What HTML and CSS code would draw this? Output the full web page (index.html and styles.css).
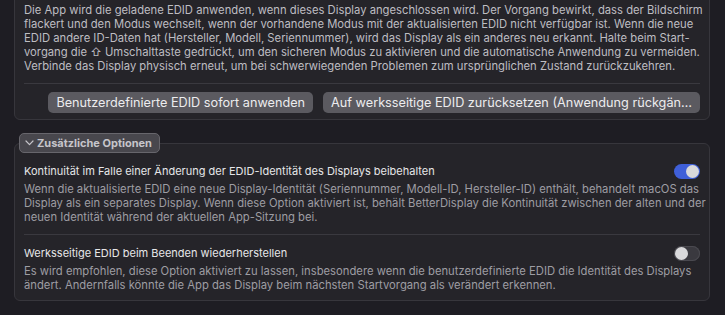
FILE: index.html
```html
<!DOCTYPE html>
<html>
<head>
    <meta charset="utf-8">
    <title>EDID Einstellungen</title>
    <link rel="stylesheet" href="styles.css">
</head>
<body>
    <div class="page">
        <div class="card card-top">
            <p class="info">
                Die App wird die geladene EDID anwenden, wenn dieses Display angeschlossen wird. Der Vorgang bewirkt, dass der Bildschirm<br>
                flackert und den Modus wechselt, wenn der vorhandene Modus mit der aktualisierten EDID nicht verfügbar ist. Wenn die neue<br>
                EDID andere ID-Daten hat (Hersteller, Modell, Seriennummer), wird das Display als ein anderes neu erkannt. Halte beim Start-<br>
                vorgang die ⇧ Umschalttaste gedrückt, um den sicheren Modus zu aktivieren und die automatische Anwendung zu vermeiden.<br>
                Verbinde das Display physisch erneut, um bei schwerwiegenden Problemen zum ursprünglichen Zustand zurückzukehren.
            </p>
            <div class="sep"></div>
            <div class="actions">
                <button class="btn">Benutzerdefinierte EDID sofort anwenden</button>
                <button class="btn">Auf werksseitige EDID zurücksetzen (Anwendung rückgän…</button>
            </div>
        </div>

        <div class="group">
            <button class="disclosure">
                <svg width="9" height="6" viewBox="0 0 9 6"><path d="M1 1 L4.5 4.6 L8 1" fill="none" stroke="#c6c5ca" stroke-width="1.2" stroke-linecap="round" stroke-linejoin="round"/></svg>
                Zusätzliche Optionen
            </button>
            <div class="card card-options">
                <div class="option">
                    <div class="option-head">
                        <span class="option-title">Kontinuität im Falle einer Änderung der EDID-Identität des Displays beibehalten</span>
                        <span class="toggle on"><span class="knob"></span></span>
                    </div>
                    <p class="option-desc">
                        Wenn die aktualisierte EDID eine neue Display-Identität (Seriennummer, Modell-ID, Hersteller-ID) enthält, behandelt macOS das<br>
                        Display als ein separates Display. Wenn diese Option aktiviert ist, behält BetterDisplay die Kontinuität zwischen der alten und der<br>
                        neuen Identität während der aktuellen App-Sitzung bei.
                    </p>
                </div>
                <div class="sep"></div>
                <div class="option">
                    <div class="option-head">
                        <span class="option-title">Werksseitige EDID beim Beenden wiederherstellen</span>
                        <span class="toggle"><span class="knob"></span></span>
                    </div>
                    <p class="option-desc">
                        Es wird empfohlen, diese Option aktiviert zu lassen, insbesondere wenn die benutzerdefinierte EDID die Identität des Displays<br>
                        ändert. Andernfalls könnte die App das Display beim nächsten Startvorgang als verändert erkennen.
                    </p>
                </div>
            </div>
        </div>
    </div>
</body>
</html>
```

FILE: styles.css
```css
html, body { margin: 0; padding: 0; background: #1e1d23; }
body { font-family: Inter, "Liberation Sans", sans-serif; font-size: 11px; color: #e4e4e6; overflow: hidden; }
.page { padding: 0 15px 0 14px; }

.card { background: #252429; border: 1px solid #37363c; border-radius: 6px; padding: 0 9px; }
.card-top { margin-top: -12px; padding-top: 14px; padding-bottom: 6px; border-top-left-radius: 0; border-top-right-radius: 0; }
.info { margin: 0; font-size: 11.25px; line-height: 14px; color: #bebdc2; white-space: nowrap; }
.sep { height: 1px; background: #3a393f; }
.card-top .sep { margin: 10px 0 8px; }

.actions { display: flex; justify-content: flex-end; gap: 10px; }
.btn { font-family: inherit; font-size: 12.7px; color: #ececee; background: #5b5a60; border: none; border-radius: 5px; height: 21px; padding: 0 8px; white-space: nowrap; }

.group { margin-top: 13px; }
.disclosure { position: relative; z-index: 1; margin-left: 5px; height: 20px; padding: 0 7px 0 5px; display: flex; align-items: center; gap: 3px; font-family: inherit; font-size: 11px; font-weight: bold; color: #c6c5ca; background: #48474d; border: 1px solid #67666c; border-radius: 5px; }
.card-options { margin-top: -10px; padding-top: 20px; padding-bottom: 8px; }
.card-options .sep { margin: 10px 0 11px; }

.option-head { display: flex; justify-content: space-between; align-items: center; height: 14px; }
.option-title { line-height: 14px; color: #e6e6e8; }
.option-desc { margin: 4px 0 0; font-size: 11.25px; line-height: 14px; color: #9e9da3; white-space: nowrap; }

.toggle { width: 26px; height: 15px; border-radius: 8px; background: #3a393f; box-shadow: inset 0 0 0 1px #4a494f; display: flex; align-items: center; padding: 0 1px; box-sizing: border-box; }
.toggle.on { background: #3f5fd8; box-shadow: none; justify-content: flex-end; }
.knob { width: 13px; height: 13px; border-radius: 50%; background: #d9d9db; }
```
